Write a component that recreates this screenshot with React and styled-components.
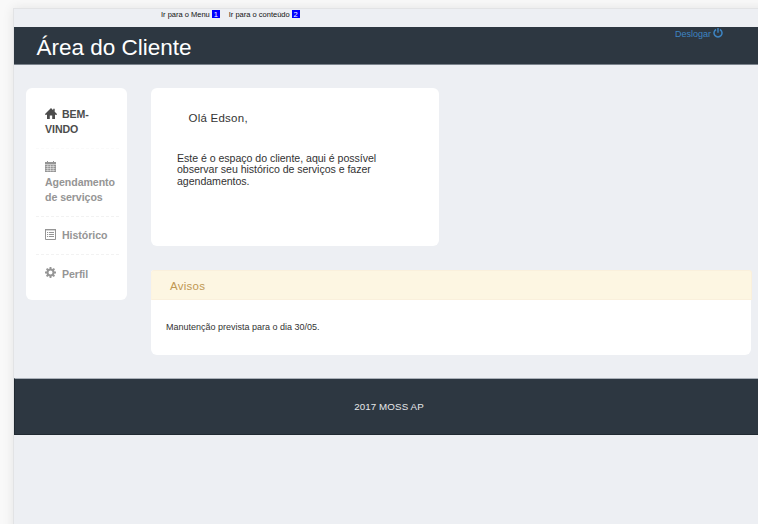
import React from "react";
import styled, { createGlobalStyle } from "styled-components";

const GlobalStyle = createGlobalStyle`
  * { box-sizing: border-box; }
  html, body { margin: 0; overflow: hidden; }
  body { background: #f9f9f9; font-family: "Liberation Sans", Arial, sans-serif; color: #333; }
  p, h1, h2, ul { margin: 0; padding: 0; font-weight: normal; }
`;

const Shell = styled.div`
  height: 524px;
  padding: 8px 0 0 13px;
  overflow: hidden;
`;

const Page = styled.div`
  width: 760px;
  height: 530px;
  background: #edeff3;
  border: 1px solid #e2e3e5;
  box-shadow: 0 0 11px rgba(0, 0, 0, 0.09);
`;

const SkipBar = styled.nav`
  display: flex;
  gap: 9px;
  height: 18px;
  padding: 1px 0 0 147px;
`;

const SkipLink = styled.a`
  display: flex;
  gap: 2px;
  height: 9px;
  font-size: 7.5px;
  line-height: 9px;
  color: #111;
`;

const Key = styled.span`
  width: 8px;
  height: 8px;
  background: #00f;
  color: #fff;
  text-align: center;
`;

const Header = styled.header`
  display: flex;
  justify-content: space-between;
  height: 38px;
  padding: 0 49px 0 22.5px;
  background: #2d3741;
  border-bottom: 1px solid #7b838c;
`;

const Title = styled.h1`
  padding-top: 8px;
  font-size: 22.5px;
  line-height: 25px;
  color: #fff;
`;

const Logout = styled.a`
  display: flex;
  gap: 2px;
  height: 13px;
  padding-top: 1px;
  font-size: 9px;
  line-height: 12px;
  color: #3d84c2;
`;

const Main = styled.main`
  display: flex;
  align-items: flex-start;
  gap: 24.5px;
  height: 313px;
  padding: 23px 0 0 12px;
`;

const Menu = styled.ul`
  width: 100.5px;
  height: 212px;
  padding: 13px 7.5px 0 10px;
  background: #fff;
  border-radius: 6px;
  list-style: none;
`;

const MenuItem = styled.li`
  height: ${(p) => p.$height}px;
  padding: ${(p) => p.$top}px 0 0 9px;
  border-bottom: ${(p) => (p.$last ? "0" : "1px dashed #f4f4f4")};
  border-bottom-color: ${(p) => (p.$active ? "#fafafa" : "#f2f2f2")};
  font-size: 10.6px;
  letter-spacing: -0.06px;
  font-weight: bold;
  line-height: 15px;
  color: ${(p) => (p.$active ? "#4c4c4c" : "#959595")};
  svg {
    margin-right: ${(p) => (p.$active ? 5 : 6)}px;
    vertical-align: ${(p) => (p.$last ? 0 : -1)}px;
  }
`;

const Content = styled.div`
  display: flex;
  flex-direction: column;
  gap: 24px;
  width: 601px;
`;

const Welcome = styled.section`
  width: 287.5px;
  height: 158px;
  padding: 23px 26px 0;
  background: #fff;
  border-radius: 6px;
`;

const Greeting = styled.h2`
  padding-left: 11.5px;
  font-size: 11.49px;
  letter-spacing: 0.25px;
  line-height: 14px;
`;

const Intro = styled.p`
  width: 210px;
  margin-top: 28px;
  font-size: 10.6px;
  letter-spacing: -0.04px;
  line-height: 11.4px;
`;

const Notices = styled.section`
  width: 600px;
  height: 84.5px;
  background: #fff;
  border-radius: 3px 3px 6px 6px;
`;

const NoticeHeading = styled.h2`
  width: 601px;
  height: 30px;
  padding: 8px 18px 0;
  background: #fdf6e2;
  border: 1px solid #faf0dc;
  border-left-color: #fdf4e0;
  border-radius: 3px 3px 0 0;
  font-size: 11.49px;
  letter-spacing: 0.25px;
  line-height: 14px;
  color: #c09853;
`;

const NoticeText = styled.p`
  padding: 21px 15px 0;
  font-size: 9px;
  line-height: 12px;
`;

const Footer = styled.footer`
  height: 57px;
  padding: 21px 8px 0 0;
  background: #2d3741;
  border: 1px solid #202931;
  border-top-color: #aab0b8;
  text-align: center;
  font-size: 9.75px;
  letter-spacing: 0.12px;
  line-height: 13px;
  color: #e6e8ea;
`;

const PowerIcon = () => (
  <svg width="10" height="10" viewBox="0 0 10 10" fill="none" stroke="currentColor">
    <path d="M3 1.5a4 4 0 1 0 4 0" strokeWidth="1.5" />
    <path d="M5 0v4.8" strokeWidth="1.4" />
  </svg>
);

const HomeIcon = () => (
  <svg width="12" height="11" viewBox="0 0 12 11" fill="currentColor">
    <path d="M6 0 8.2 2.2V.7h1.5v3L12 6v.7h-2V11H7.2V7.6H4.8V11H2V6.7H0V6z" />
  </svg>
);

const CalendarIcon = () => (
  <svg width="11" height="11" viewBox="0 0 11 11" fill="currentColor">
    <path d="M0 1h2V0h1v1h5V0h1v1h2v2H0zM0 3.5h11V11H0z" />
    <path d="M2.8 4v6.5M5.5 4v6.5M8.2 4v6.5M.6 5.5h9.8M.6 7.5h9.8M.6 9.5h9.8" stroke="#fff" strokeWidth=".45" />
  </svg>
);

const ListIcon = () => (
  <svg width="11" height="11" viewBox="0 0 11 11" fill="none" stroke="currentColor">
    <path d="M.5.5h10v10H.5z" />
    <path d="M0 .7h11" strokeWidth="1.4" />
    <path d="M2 3.5h1.2M4 3.5h5M2 5.5h1.2M4 5.5h5M2 7.5h1.2M4 7.5h5" />
  </svg>
);

const GearIcon = () => (
  <svg width="11" height="11" viewBox="0 0 11 11" fill="none" stroke="currentColor">
    <circle cx="5.5" cy="5.5" r="3" strokeWidth="2" />
    <path d="M5.5 0v2M5.5 9v2M0 5.5h2M9 5.5h2M1.6 1.6 3 3M8 8l1.4 1.4M1.6 9.4 3 8M8 3l1.4-1.4" strokeWidth="1.9" />
  </svg>
);

export default function App() {
  return (
    <>
      <GlobalStyle />
      <Shell>
        <Page>
          <SkipBar>
            <SkipLink>Ir para o Menu <Key>1</Key></SkipLink>
            <SkipLink>Ir para o conteúdo <Key>2</Key></SkipLink>
          </SkipBar>
          <Header>
            <Title>Área do Cliente</Title>
            <Logout>Deslogar <PowerIcon /></Logout>
          </Header>
          <Main>
            <Menu>
              <MenuItem $height={48} $top={6} $active><HomeIcon />BEM-<br />VINDO</MenuItem>
              <MenuItem $height={68} $top={11}><CalendarIcon /><br />Agendamento<br />de serviços</MenuItem>
              <MenuItem $height={38} $top={11}><ListIcon />Histórico</MenuItem>
              <MenuItem $height={38} $top={12} $last><GearIcon />Perfil</MenuItem>
            </Menu>
            <Content>
              <Welcome>
                <Greeting>Olá Edson,</Greeting>
                <Intro>Este é o espaço do cliente, aqui é possível observar seu histórico de serviços e fazer agendamentos.</Intro>
              </Welcome>
              <Notices>
                <NoticeHeading>Avisos</NoticeHeading>
                <NoticeText>Manutenção prevista para o dia 30/05.</NoticeText>
              </Notices>
            </Content>
          </Main>
          <Footer>2017 MOSS AP</Footer>
        </Page>
      </Shell>
    </>
  );
}
